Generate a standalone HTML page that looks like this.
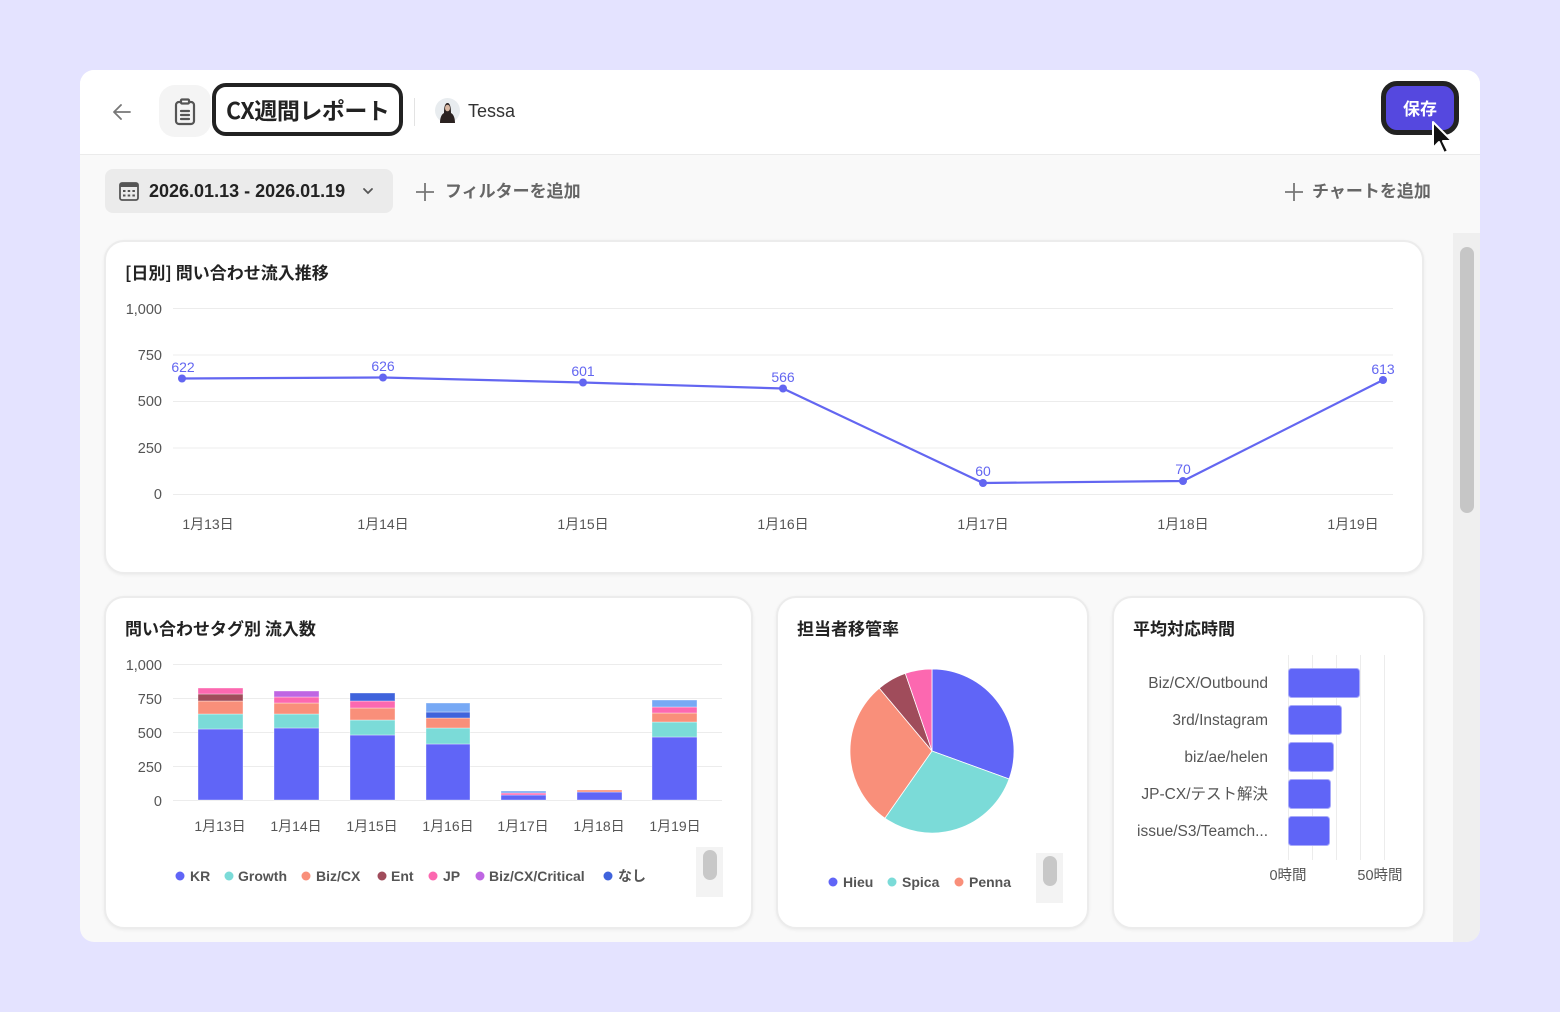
<!DOCTYPE html>
<html><head><meta charset="utf-8">
<style>
*{margin:0;padding:0;box-sizing:border-box}
body{width:1560px;height:1012px;background:#e4e3ff;font-family:"Liberation Sans","Noto Sans CJK JP",sans-serif;position:relative;overflow:hidden;color:#222}
.main{position:absolute;left:80px;top:70px;width:1400px;height:872px;background:#f9f9f9;border-radius:14px;overflow:hidden}
.hdr{position:absolute;left:0;top:0;width:1400px;height:85px;background:#fff;border-bottom:1px solid #ebebeb}
.card{position:absolute;background:#fff;border:2px solid #ececec;border-radius:20px;box-shadow:0 1px 3px rgba(0,0,0,.06)}
.t{position:absolute;font-weight:700;font-size:17px;color:#222;font-family:"Noto Sans CJK JP",sans-serif;line-height:24px}
svg text{font-family:"Liberation Sans","Noto Sans CJK JP",sans-serif}
</style></head><body>
<div class="main">
 <div class="hdr">
  <svg style="position:absolute;left:30px;top:30px" width="24" height="24" viewBox="0 0 24 24" fill="none" stroke="#777" stroke-width="1.8" stroke-linecap="round" stroke-linejoin="round"><path d="M20 12H4M11 5l-7 7 7 7"/></svg>
  <div style="position:absolute;left:79px;top:15px;width:52px;height:52px;border-radius:16px;background:#f4f4f4"></div>
  <svg style="position:absolute;left:93px;top:28px" width="24" height="28" viewBox="0 0 24 28" fill="none" stroke="#555" stroke-width="2.2" stroke-linejoin="round"><rect x="3" y="4" width="18" height="22" rx="3"/><rect x="8" y="1.5" width="8" height="4" rx="1" fill="#fff"/><path d="M8 13h8M8 17h8M8 21h8" stroke-linecap="round"/></svg>
  <div style="position:absolute;left:132px;top:13px;width:191px;height:53px;border:4px solid #222;border-radius:14px;background:#fff"></div>
  <div style="position:absolute;left:146px;top:24px;font-size:23px;font-weight:700;font-family:'Noto Sans CJK JP',sans-serif;line-height:30px;letter-spacing:-0.5px">CX週間レポート</div>
  <div style="position:absolute;left:334px;top:28px;width:1px;height:28px;background:#e3e3e3"></div>
  <svg style="position:absolute;left:355px;top:28px" width="25" height="25" viewBox="0 0 25 25"><circle cx="12.5" cy="12.5" r="12.5" fill="#e8ecef"/><path d="M5 25c0-6 2-9 4-10 0-6 1-10 3.5-10S16 9 16 15c2 1 4 4 4 10z" fill="#2b2221"/><ellipse cx="12.5" cy="10" rx="2.5" ry="3.3" fill="#d9b8a3"/></svg>
  <div style="position:absolute;left:388px;top:29px;font-size:18px;color:#333;line-height:24px">Tessa</div>
  <div style="position:absolute;left:1301px;top:11px;width:78px;height:54px;border:5px solid #222;border-radius:16px;background:#5548df"></div>
  <div style="position:absolute;left:1301px;top:26px;width:78px;text-align:center;color:#fff;font-weight:700;font-size:17px;font-family:'Noto Sans CJK JP',sans-serif;line-height:24px">保存</div>
  <svg style="position:absolute;left:1351px;top:50px" width="24" height="36" viewBox="0 0 24 36"><path d="M2 2v26l6-6 5 11 4-2-5-10h9z" fill="#111" stroke="#fff" stroke-width="2" stroke-linejoin="round"/></svg>
 </div>
 <div style="position:absolute;left:25px;top:99px;width:288px;height:44px;background:#ebebeb;border-radius:8px"></div>
 <svg style="position:absolute;left:39px;top:112px" width="20" height="19" viewBox="0 0 20 19" fill="#555"><rect x="1" y="1" width="18" height="17" rx="2" fill="none" stroke="#555" stroke-width="1.8"/><rect x="1" y="1" width="18" height="4"/><g><rect x="4" y="8" width="2.5" height="2"/><rect x="8.7" y="8" width="2.5" height="2"/><rect x="13.4" y="8" width="2.5" height="2"/><rect x="4" y="12.5" width="2.5" height="2"/><rect x="8.7" y="12.5" width="2.5" height="2"/><rect x="13.4" y="12.5" width="2.5" height="2"/></g></svg>
 <div style="position:absolute;left:69px;top:109px;font-size:18px;font-weight:700;line-height:24px;color:#222">2026.01.13 - 2026.01.19</div>
 <svg style="position:absolute;left:281px;top:116px" width="14" height="10" viewBox="0 0 14 10" fill="none" stroke="#555" stroke-width="1.8" stroke-linecap="round"><path d="M3 3l4 4 4-4"/></svg>
 <svg style="position:absolute;left:334px;top:111px" width="22" height="22" viewBox="0 0 22 22" stroke="#777" stroke-width="1.8"><path d="M11 2v18M2 11h18"/></svg>
 <div style="position:absolute;left:365px;top:108px;font-size:17px;font-weight:700;color:#666;font-family:'Noto Sans CJK JP',sans-serif;line-height:24px">フィルターを追加</div>
 <svg style="position:absolute;left:1203px;top:111px" width="22" height="22" viewBox="0 0 22 22" stroke="#777" stroke-width="1.8"><path d="M11 2v18M2 11h18"/></svg>
 <div style="position:absolute;left:1232px;top:108px;font-size:17px;font-weight:700;color:#666;font-family:'Noto Sans CJK JP',sans-serif;line-height:24px">チャートを追加</div>
 <div style="position:absolute;left:1373px;top:163px;width:27px;height:709px;background:#efefef"></div>
 <div style="position:absolute;left:1380px;top:177px;width:14px;height:266px;background:#c6c6c6;border-radius:7px"></div>
</div>

<div class="card" style="left:104px;top:240px;width:1320px;height:334px"></div>
<div class="t" style="left:125px;top:260px">[日別] 問い合わせ流入推移</div>
<div class="card" style="left:104px;top:596px;width:649px;height:333px"></div>
<div class="t" style="left:125px;top:616px">問い合わせタグ別 流入数</div>
<div class="card" style="left:776px;top:596px;width:313px;height:333px"></div>
<div class="t" style="left:797px;top:616px">担当者移管率</div>
<div class="card" style="left:1112px;top:596px;width:313px;height:333px"></div>
<div class="t" style="left:1133px;top:616px">平均対応時間</div>

<svg style="position:absolute;left:0;top:0" width="1560" height="1012">
 <g stroke="#ececec" stroke-width="1">
  <path d="M173 308.5H1393M173 355H1393M173 401.5H1393M173 448H1393M173 494.5H1393"/>
  <path d="M173 664.5H722M173 698.5H722M173 732.5H722M173 766.5H722M173 800.5H722"/>
  <path d="M1288.5 655V860M1312.5 655V860M1336.5 655V860M1360.5 655V860M1384.5 655V860"/>
 </g>
 <g font-size="14.5" fill="#555" text-anchor="end">
  <text x="162" y="314">1,000</text><text x="162" y="360">750</text><text x="162" y="406">500</text><text x="162" y="453">250</text><text x="162" y="499">0</text>
  <text x="162" y="670">1,000</text><text x="162" y="704">750</text><text x="162" y="738">500</text><text x="162" y="772">250</text><text x="162" y="806">0</text>
 </g>
 <g font-size="14" fill="#555" text-anchor="middle">
  <text x="208" y="529">1月13日</text><text x="383" y="529">1月14日</text><text x="583" y="529">1月15日</text><text x="783" y="529">1月16日</text><text x="983" y="529">1月17日</text><text x="1183" y="529">1月18日</text><text x="1353" y="529">1月19日</text>
  <text x="220" y="831">1月13日</text><text x="296" y="831">1月14日</text><text x="372" y="831">1月15日</text><text x="448" y="831">1月16日</text><text x="523" y="831">1月17日</text><text x="599" y="831">1月18日</text><text x="675" y="831">1月19日</text>
 </g>
 <polyline points="182,378.5 383,377.5 583,382.5 783,388.5 983,483 1183,481 1383,380" fill="none" stroke="#6366f1" stroke-width="2.2"/>
 <g fill="#6366f1"><circle cx="182" cy="378.5" r="4"/><circle cx="383" cy="377.5" r="4"/><circle cx="583" cy="382.5" r="4"/><circle cx="783" cy="388.5" r="4"/><circle cx="983" cy="483" r="4"/><circle cx="1183" cy="481" r="4"/><circle cx="1383" cy="380" r="4"/></g>
 <g font-size="14" fill="#6366f1" text-anchor="middle">
  <text x="183" y="372">622</text><text x="383" y="371">626</text><text x="583" y="376">601</text><text x="783" y="382">566</text><text x="983" y="476">60</text><text x="1183" y="474">70</text><text x="1383" y="374">613</text>
 </g>
 <g stroke="#fff" stroke-width="0.6" stroke-opacity="0.6">
  <rect x="198" y="729" width="45" height="71" fill="#6065f7"/><rect x="198" y="714" width="45" height="15" fill="#7bdbd8"/><rect x="198" y="701" width="45" height="13" fill="#f98f7a"/><rect x="198" y="694" width="45" height="7" fill="#a04c5b"/><rect x="198" y="688" width="45" height="6" fill="#fc68b0"/>
  <rect x="274" y="728" width="45" height="72" fill="#6065f7"/><rect x="274" y="714" width="45" height="14" fill="#7bdbd8"/><rect x="274" y="703" width="45" height="11" fill="#f98f7a"/><rect x="274" y="697" width="45" height="6" fill="#fc68b0"/><rect x="274" y="691" width="45" height="6" fill="#bf66e3"/>
  <rect x="350" y="735" width="45" height="65" fill="#6065f7"/><rect x="350" y="720" width="45" height="15" fill="#7bdbd8"/><rect x="350" y="708" width="45" height="12" fill="#f98f7a"/><rect x="350" y="701" width="45" height="7" fill="#fc68b0"/><rect x="350" y="693" width="45" height="8" fill="#3f63dc"/>
  <rect x="426" y="744" width="44" height="56" fill="#6065f7"/><rect x="426" y="728" width="44" height="16" fill="#7bdbd8"/><rect x="426" y="718" width="44" height="10" fill="#f98f7a"/><rect x="426" y="712" width="44" height="6" fill="#3f63dc"/><rect x="426" y="703" width="44" height="9" fill="#77a9f5"/>
  <rect x="501" y="795" width="45" height="5" fill="#6065f7"/><rect x="501" y="793" width="45" height="2" fill="#fc68b0"/><rect x="501" y="791" width="45" height="2" fill="#77a9f5"/>
  <rect x="577" y="792" width="45" height="8" fill="#6065f7"/><rect x="577" y="790" width="45" height="2" fill="#f98f7a"/>
  <rect x="652" y="737" width="45" height="63" fill="#6065f7"/><rect x="652" y="722" width="45" height="15" fill="#7bdbd8"/><rect x="652" y="713" width="45" height="9" fill="#f98f7a"/><rect x="652" y="707" width="45" height="6" fill="#fc68b0"/><rect x="652" y="700" width="45" height="7" fill="#77a9f5"/>
 </g>
 <g font-size="14" font-weight="700" fill="#555">
  <circle cx="180" cy="876" r="4.5" fill="#6065f7"/><text x="190" y="881">KR</text>
  <circle cx="229" cy="876" r="4.5" fill="#7bdbd8"/><text x="238" y="881">Growth</text>
  <circle cx="306" cy="876" r="4.5" fill="#f98f7a"/><text x="316" y="881">Biz/CX</text>
  <circle cx="382" cy="876" r="4.5" fill="#a04c5b"/><text x="391" y="881">Ent</text>
  <circle cx="433" cy="876" r="4.5" fill="#fc68b0"/><text x="443" y="881">JP</text>
  <circle cx="480" cy="876" r="4.5" fill="#bf66e3"/><text x="489" y="881">Biz/CX/Critical</text>
  <circle cx="608" cy="876" r="4.5" fill="#3f63dc"/><text x="618" y="881">なし</text>
  <circle cx="833" cy="882" r="4.5" fill="#6065f7"/><text x="843" y="887">Hieu</text>
  <circle cx="892" cy="882" r="4.5" fill="#7bdbd8"/><text x="902" y="887">Spica</text>
  <circle cx="959" cy="882" r="4.5" fill="#f98f7a"/><text x="969" y="887">Penna</text>
 </g>
 <rect x="696" y="847" width="27" height="50" fill="#f3f3f3"/><rect x="703" y="850" width="14" height="30" rx="7" fill="#c8c8c8"/>
 <rect x="1036" y="853" width="27" height="50" fill="#f3f3f3"/><rect x="1043" y="856" width="14" height="30" rx="7" fill="#c8c8c8"/>
 <g stroke="#fff" stroke-width="0.8">
  <path d="M932 751L932 669A82 82 0 0 1 1009.1 779Z" fill="#6065f7"/>
  <path d="M932 751L1009.1 779A82 82 0 0 1 884.9 818.2Z" fill="#7bdbd8"/>
  <path d="M932 751L884.9 818.2A82 82 0 0 1 879.3 688.2Z" fill="#f98f7a"/>
  <path d="M932 751L879.3 688.2A82 82 0 0 1 905.3 673.4Z" fill="#a04c5b"/>
  <path d="M932 751L905.3 673.4A82 82 0 0 1 932 669Z" fill="#fc68b0"/>
 </g>
 <g fill="#6065f7" stroke="#a9abfa" stroke-width="1">
  <rect x="1288.5" y="668.5" width="71" height="29" rx="3"/>
  <rect x="1288.5" y="705.5" width="53" height="29" rx="3"/>
  <rect x="1288.5" y="742.5" width="45" height="29" rx="3"/>
  <rect x="1288.5" y="779.5" width="42" height="29" rx="3"/>
  <rect x="1288.5" y="816.5" width="41" height="29" rx="3"/>
 </g>
 <g font-size="15.5" fill="#555" text-anchor="end">
  <text x="1268" y="688">Biz/CX/Outbound</text><text x="1268" y="725">3rd/Instagram</text><text x="1268" y="762">biz/ae/helen</text><text x="1268" y="799">JP-CX/テスト解決</text><text x="1268" y="836">issue/S3/Teamch...</text>
 </g>
 <g font-size="14.5" fill="#555" text-anchor="middle"><text x="1288" y="880">0時間</text><text x="1380" y="880">50時間</text></g>
</svg>
</body></html>
